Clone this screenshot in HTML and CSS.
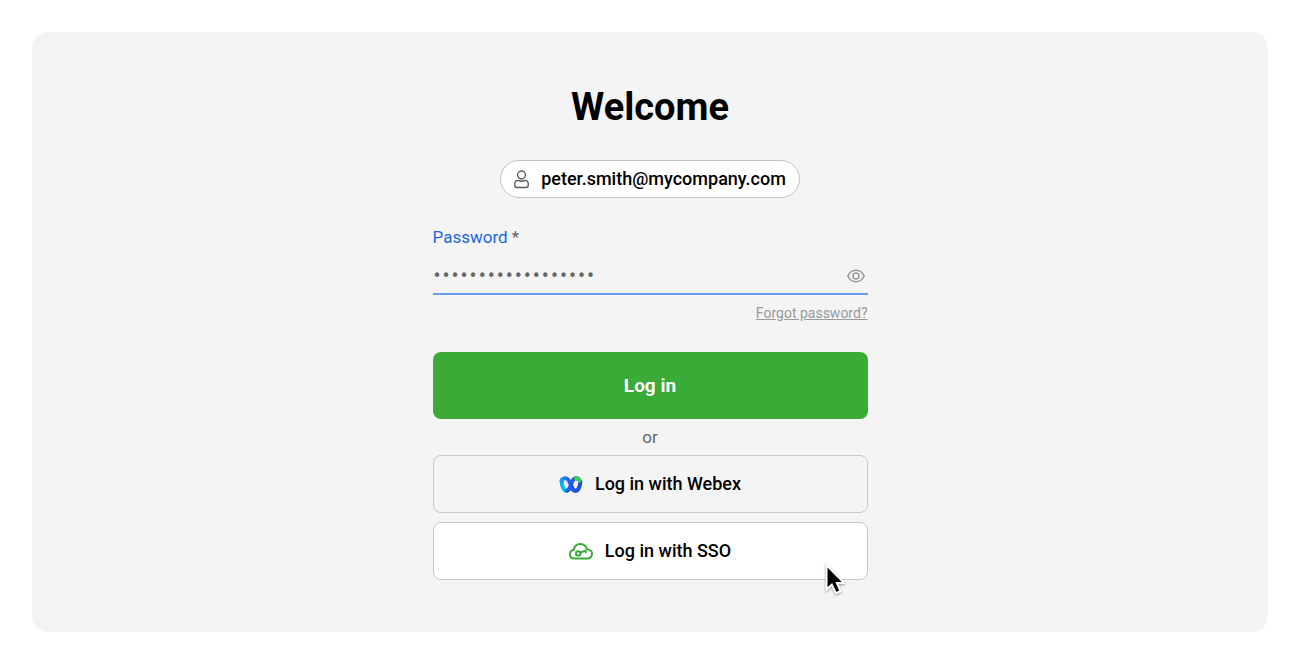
FILE: index.html
```html
<!DOCTYPE html>
<html lang="en">
<head>
<meta charset="utf-8">
<meta name="viewport" content="width=device-width, initial-scale=1">
<title>Welcome</title>
<link rel="stylesheet" href="styles.css">
</head>
<body>
<main class="panel">
  <form class="login">
    <h1 class="title">Welcome</h1>
    <button type="button" class="account">
      <svg class="account-icon" viewBox="0 0 16 20" fill="none" stroke="currentColor" stroke-width="1.5" aria-hidden="true">
        <circle cx="8" cy="5.2" r="4.2"/>
        <path d="M4.4 10.9C6.7 12.1 9.3 12.1 11.6 10.9C13.8 10.9 15.2 12.6 15.2 14.8V16.2C15.2 17.7 14.2 18.5 12.9 18.5H3.1C1.8 18.5.8 17.7.8 16.2V14.8C.8 12.6 2.2 10.9 4.4 10.9Z"/>
      </svg>
      <span>peter.smith@mycompany.com</span>
    </button>
    <div class="label-row"><label for="password">Password</label> <span class="required">*</span></div>
    <div class="field">
      <input id="password" class="password" type="password" value="correcthorsebatter" required>
      <button type="button" class="reveal" aria-label="Show password">
        <svg class="eye" viewBox="0 0 18 14" fill="none" stroke="currentColor" stroke-width="1.6" aria-hidden="true">
          <path d="M.8 7C2.5 3.4 5.4 1.3 9 1.3S15.5 3.4 17.2 7C15.5 10.6 12.6 12.7 9 12.7S2.5 10.6.8 7Z"/>
          <circle cx="9" cy="7" r="3"/>
        </svg>
      </button>
    </div>
    <a class="forgot" href="#">Forgot password?</a>
    <button type="submit" class="button primary">Log in</button>
    <div class="or">or</div>
    <div class="providers">
      <button type="button" class="button">
        <svg class="provider-icon" viewBox="0 0 24 24" fill="none" stroke-linecap="round" stroke-width="4" aria-hidden="true">
          <defs>
            <linearGradient id="cyan" x1="0" y1="0" x2="0" y2="1"><stop stop-color="#14a5ee"/><stop offset="1" stop-color="#00c8dc"/></linearGradient>
            <linearGradient id="blue" x1="0" y1="0" x2="1" y2="0"><stop stop-color="#149bea"/><stop offset=".4" stop-color="#2458f0"/><stop offset="1" stop-color="#1d4ed8"/></linearGradient>
          </defs>
          <path d="M16.500 18.800C13.500 18.800 12.200 15 12 12" stroke="#1747b8"/>
          <path d="M2.600 8.500C2.700 13.500 4.500 18.800 7.300 18.800C9.500 18.800 10.800 16.500 11.500 14" stroke="url(#cyan)"/>
          <path d="M8 18.800C13 17.500 11.500 6.200 16.700 6.200C17.800 6.200 18.800 6.500 19.500 7" stroke="#2458e8"/>
          <path d="M2.600 8.500C3.300 6.800 4.800 6.200 6.500 6.200C12 6.200 11.500 18.800 16.700 18.800C19.500 18.800 21.300 13.500 21.400 9.500" stroke="url(#blue)"/>
          <path d="M17 6.200C18.800 6.200 20 7 20.700 8.500" stroke="#3dcc55"/>
        </svg>
        <span>Log in with Webex</span>
      </button>
      <button type="button" class="button hovered">
        <svg class="provider-icon" viewBox="0 0 24 24" fill="none" stroke="#3aab37" stroke-width="2" stroke-linecap="round" stroke-linejoin="round" aria-hidden="true">
          <path d="M5.700 19.500C2.800 19.500 1 17.800 1 15.300C1 13 2.500 11.300 4.700 11C5.300 7.300 8 5 11.400 5C14.700 5 17.100 7.200 17.900 10.300C21 10.200 23 12.200 23 14.800C23 17.600 21 19.500 18.200 19.500Z"/>
          <circle cx="9.200" cy="14.400" r="2.200"/>
          <path d="M11.300 13.500L16.500 11.600L16.800 13.200"/>
        </svg>
        <span>Log in with SSO</span>
        <svg class="pointer" viewBox="0 0 20 32" aria-hidden="true">
          <path d="M1.500 2V26.500L6.800 21.600L10.800 30.200L15.500 28.200L11.900 20H19.200Z" fill="#000" stroke="#fff" stroke-width="2"/>
        </svg>
      </button>
    </div>
  </form>
</main>
</body>
</html>
```
FILE: styles.css
```css
* {
  box-sizing: border-box;
}

body {
  margin: 0;
  padding: 32px;
  background: #fff;
  color: #000;
  font-family: Roboto, "Liberation Sans", sans-serif;
  font-size: 18px;
}

button,
input {
  font: inherit;
  color: inherit;
}

button {
  cursor: pointer;
}

.panel {
  display: flex;
  justify-content: center;
  padding: 51px 24px 52px;
  border-radius: 16px;
  background: #f4f4f4;
}

.login {
  display: flex;
  flex-direction: column;
  width: 100%;
  max-width: 435px;
}

.title {
  margin: 0 0 29px;
  font-size: 38px;
  font-weight: 700;
  line-height: 48px;
  text-align: center;
}

.account {
  display: flex;
  align-items: center;
  align-self: center;
  gap: 12px;
  padding: 7px 13px;
  border: 1px solid #c4c4c4;
  border-radius: 20px;
  background: #fff;
  font-weight: 500;
  line-height: 22px;
}

.account-icon {
  width: 15px;
  height: 19px;
  color: #5c5c5c;
}

.label-row {
  margin-top: 28px;
  font-size: 17px;
  line-height: 22px;
  color: #1a66e8;
}

.required {
  color: #666;
}

.field {
  display: flex;
  align-items: center;
  height: 47px;
  padding-top: 11px;
  border-bottom: 2px solid #6a9cf0;
}

.password {
  flex: 1;
  min-width: 0;
  padding: 0;
  border: 0;
  outline: 0;
  background: transparent;
  color: #666;
  font-family: "DejaVu Sans Mono", monospace;
  font-size: 15px;
}

.reveal {
  display: flex;
  padding: 3px;
  border: 0;
  background: transparent;
  color: #999;
}

.eye {
  width: 18px;
  height: 14px;
}

.forgot {
  align-self: flex-end;
  margin: 8px 0 29px;
  color: #999;
  font-size: 14px;
  line-height: 20px;
}

.button {
  position: relative;
  display: flex;
  align-items: center;
  justify-content: center;
  gap: 12px;
  height: 58px;
  padding: 0 16px;
  border: 1px solid #c8c8c8;
  border-radius: 8px;
  background: transparent;
  font-weight: 500;
}

.button span {
  padding-bottom: 2px;
}

.hovered {
  background: #fff;
}

.primary {
  height: 67px;
  border: 0;
  background: #3aab37;
  color: #fff;
  font-size: 19px;
  font-weight: 700;
}

.or {
  padding: 7px 0;
  color: #666;
  font-size: 17px;
  line-height: 22px;
  text-align: center;
}

.providers {
  display: flex;
  flex-direction: column;
  gap: 9px;
}

.provider-icon {
  width: 24px;
  height: 24px;
}

.pointer {
  position: absolute;
  right: 22px;
  bottom: -16px;
  width: 20px;
  height: 32px;
  filter: drop-shadow(0 1px 1px rgb(0 0 0 / 40%));
}
```
